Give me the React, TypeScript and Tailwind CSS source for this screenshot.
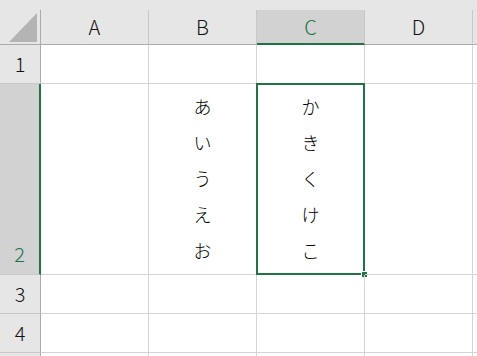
import React from 'react';

const columns = ['A', 'B', 'C', 'D'];
const colB = ['あ', 'い', 'う', 'え', 'お'];
const colC = ['か', 'き', 'く', 'け', 'こ'];

const font = { fontFamily: '"Noto Sans CJK JP", "Noto Sans", sans-serif' };

function ColHeader({ label, selected }: { label: string; selected?: boolean }) {
  return (
    <div
      className={`flex items-center justify-center border-r border-r-[#c8c8c8] text-[20px] font-light ${
        selected
          ? 'bg-[#d2d2d2] border-b-2 border-b-[#217346] text-[#217346]'
          : 'bg-[#e6e6e6] border-b border-b-[#ababab] text-[#111]'
      }`}
    >
      {label}
    </div>
  );
}

function RowHeader({ label, selected, bottom }: { label: string; selected?: boolean; bottom?: boolean }) {
  return (
    <div
      className={`flex justify-center border-b border-b-[#c8c8c8] text-[20px] font-light ${
        bottom ? 'items-end pb-[5px]' : 'items-center'
      } ${
        selected
          ? 'bg-[#d2d2d2] border-r-2 border-r-[#217346] text-[#217346]'
          : 'bg-[#e6e6e6] border-r border-r-[#ababab] text-[#111]'
      }`}
    >
      {label}
    </div>
  );
}

function Cell({ children }: { children?: React.ReactNode }) {
  return <div className="relative border-r border-b border-[#d4d4d4]">{children}</div>;
}

function Stack({ chars }: { chars: string[] }) {
  return (
    <div className="flex flex-col items-center pt-[4px] text-[18px] font-light leading-[36px] text-black">
      {chars.map((c) => (
        <span key={c}>{c}</span>
      ))}
    </div>
  );
}

export default function App() {
  return (
    <div className="w-[477px] h-[356px] overflow-hidden bg-white" style={font}>
      <div className="h-[10px] bg-[#e6e6e6]" />
      <div className="grid grid-cols-[41px_108px_108px_108px_108px_1fr] grid-rows-[35px_39px_191px_39px_39px_1fr] h-[346px]">
        {/* corner */}
        <div className="relative bg-[#e6e6e6] border-r border-b border-[#ababab]">
          <svg className="absolute left-[9px] top-[3px]" width="28" height="29" viewBox="0 0 28 29">
            <polygon points="28,0 28,29 0,29" fill="#b4b4b4" />
          </svg>
        </div>
        {columns.map((c) => (
          <ColHeader key={c} label={c} selected={c === 'C'} />
        ))}
        <div className="bg-[#e6e6e6] border-b border-b-[#ababab]" />

        {/* row 1 */}
        <RowHeader label="1" />
        <Cell />
        <Cell />
        <Cell />
        <Cell />
        <div className="border-b border-[#d4d4d4]" />

        {/* row 2 */}
        <RowHeader label="2" selected bottom />
        <Cell />
        <Cell>
          <Stack chars={colB} />
        </Cell>
        <Cell>
          <Stack chars={colC} />
          {/* active cell outline + fill handle */}
          <div className="absolute -left-[1px] -top-[1px] -right-[1px] -bottom-[1px] border-2 border-[#217346]" />
          <div className="absolute -right-[4px] -bottom-[4px] w-[7px] h-[7px] bg-[#217346] border border-white" />
        </Cell>
        <Cell />
        <div className="border-b border-[#d4d4d4]" />

        {/* row 3 */}
        <RowHeader label="3" />
        <Cell />
        <Cell />
        <Cell />
        <Cell />
        <div className="border-b border-[#d4d4d4]" />

        {/* row 4 */}
        <RowHeader label="4" />
        <Cell />
        <Cell />
        <Cell />
        <Cell />
        <div className="border-b border-[#d4d4d4]" />

        <div className="bg-[#e6e6e6] border-r border-r-[#ababab]" />
        <div className="border-r border-[#d4d4d4]" />
        <div className="border-r border-[#d4d4d4]" />
        <div className="border-r border-[#d4d4d4]" />
        <div className="border-r border-[#d4d4d4]" />
        <div />
      </div>
    </div>
  );
}
